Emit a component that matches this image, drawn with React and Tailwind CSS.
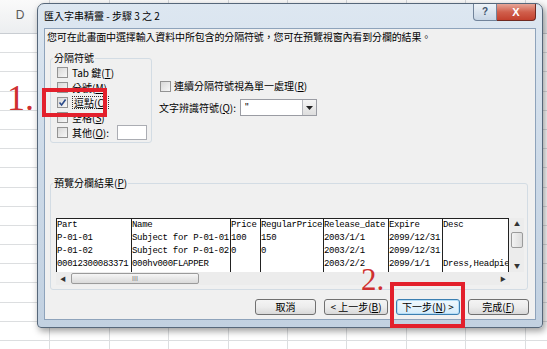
const cols = ['D', '', '', '', '', '', '', '', '', '']
const rows = Array.from({ length: 17 }, (_, i) => i)

const table = [
  { w: 75, cells: ['Part', 'P-01-01', 'P-01-02', '00012300083371'] },
  { w: 99, cells: ['Name', 'Subject for P-01-01', 'Subject for P-01-02', '000hv000FLAPPER'] },
  { w: 30, cells: ['Price', '100', '0', ''] },
  { w: 63, cells: ['RegularPrice', '150', '0', ''] },
  { w: 65, cells: ['Release_date', '2003/1/1', '2003/2/1', '2003/2/2'] },
  { w: 54, cells: ['Expire', '2099/12/31', '2099/12/31', '2099/1/1'] },
  { w: 66, cells: ['Desc', '', '', 'Dress,Headpiece'] },
]

function Sheet() {
  return (
    <div className="flex flex-col">
      <div className="flex h-[34px] ml-[-9px] border-b border-[#c9cdd2] bg-gradient-to-b from-[#fafafa] to-[#eceef0]">
        {cols.map((c, i) => (
          <div key={i} className="w-[59.4px] shrink-0 border-r border-[#d3d6da] flex items-center justify-center pb-[4px] text-[12px] text-[#5a5a5a] font-['Liberation_Sans',sans-serif]">
            {c}
          </div>
        ))}
      </div>
      {rows.map((r) => (
        <div key={r} className="flex h-[19.2px] ml-[-9px] border-b border-[#dcdee0]">
          {cols.map((c, i) => (
            <div key={i} className="w-[59.4px] shrink-0 border-r border-[#dcdee0]" />
          ))}
        </div>
      ))}
    </div>
  )
}

function Check({ checked }) {
  return (
    <span className="w-[11px] h-[11px] shrink-0 border border-[#939393] bg-gradient-to-br from-[#d8d8d8] to-[#f7f7f7] flex items-center justify-center">
      {checked && (
        <svg width="9" height="9" viewBox="0 0 9 9">
          <path d="M1.5 4.5 L3.6 7 L7.6 1.5" fill="none" stroke="#2a4a8a" strokeWidth="1.6" />
        </svg>
      )}
    </span>
  )
}

function Btn({ children, focus }) {
  return (
    <div
      className={`h-[16px] rounded-[3px] border flex items-center justify-center whitespace-nowrap ${
        focus
          ? 'border-[#3c7fb1] bg-gradient-to-b from-[#f2f9fd] to-[#d5ecfa] shadow-[inset_0_0_0_1px_#b6def7]'
          : 'border-[#707070] bg-gradient-to-b from-[#f4f4f4] via-[#ececec] to-[#d9d9d9]'
      }`}
    >
      {children}
    </div>
  )
}

function U({ children }) {
  return <span className="underline underline-offset-1">{children}</span>
}

function Preview() {
  return (
    <div className="flex flex-col w-[469px]">
      <div className="flex h-[54px]">
        <div className="flex w-[453px] bg-white border-t border-l border-[#222] font-['Liberation_Mono',monospace] text-[9px] tracking-[-0.3px] leading-[13px] text-black overflow-hidden">
          {table.map((col, i) => (
            <div key={i} className="shrink-0 border-r border-[#222] flex flex-col overflow-hidden" style={{ width: col.w }}>
              {col.cells.map((t, j) => (
                <div key={j} className="h-[13px] whitespace-nowrap">{t}</div>
              ))}
            </div>
          ))}
        </div>
        <div className="ml-[1px] w-[14px] bg-[#ececec] flex flex-col items-center">
          <span className="mt-[3px] text-[6px] leading-[6px] text-[#333]">▲</span>
          <div className="mt-[5px] w-[12px] h-[16px] rounded-[2px] border border-[#9b9b9b] bg-gradient-to-r from-[#f3f3f3] to-[#dcdcdc]" />
          <span className="mt-auto mb-[3px] text-[6px] leading-[6px] text-[#333]">▼</span>
        </div>
      </div>
      <div className="h-[13px] flex items-center bg-[#ececec] w-[454px]">
        <span className="ml-[4px] text-[6px] leading-[6px] text-[#333]">◀</span>
        <div className="ml-[5px] w-[128px] h-[11px] rounded-[2px] border border-[#9b9b9b] bg-gradient-to-b from-[#f6f6f6] to-[#dadada] flex items-center justify-center text-[7px] leading-[7px] text-[#777] font-['Liberation_Sans',sans-serif]">
          III
        </div>
        <span className="ml-auto mr-[4px] text-[6px] leading-[6px] text-[#333]">▶</span>
      </div>
    </div>
  )
}

function Dialog() {
  return (
    <div className="absolute left-[37px] top-[3px] w-[506px] h-[325px] rounded-t-[7px] rounded-b-[4px] border border-[#56677a] bg-gradient-to-b from-[#dde7f1] via-[#cddae8] to-[#c2d1e1] px-[6px] pb-[7px] flex flex-col shadow-[2px_3px_7px_rgba(0,0,0,0.4)] font-['Noto_Sans_CJK_TC',sans-serif]">
      <div className="h-[24px] flex items-start">
        <div className="pt-[6px] text-[10px] leading-[12px] text-black">匯入字串精靈 - 步驟 3 之 2</div>
        <div className="ml-auto flex">
          <div className="w-[24px] h-[17px] rounded-bl-[4px] border border-t-0 border-[#71839a] bg-gradient-to-b from-[#eef3f8] to-[#c8d6e5] flex items-center justify-center text-[10px] leading-[10px] font-bold text-[#42546c] font-['Liberation_Sans',sans-serif]">
            ?
          </div>
          <div className="w-[39px] h-[17px] rounded-br-[4px] border border-t-0 border-l-0 border-[#6e2a22] bg-gradient-to-b from-[#e6a597] via-[#d05f4c] to-[#c3402d] flex items-center justify-center text-[11px] leading-[11px] font-bold text-white font-['Liberation_Sans',sans-serif]">
            X
          </div>
        </div>
      </div>
      <div className="flex-1 border border-[#8ea3bb] bg-[#f0f0f0] flex flex-col text-[10px] leading-[12px] text-black">
        <div className="mt-[2px] pl-[2px] h-[12px] whitespace-nowrap tracking-[-0.15px]">
          您可在此畫面中選擇輸入資料中所包含的分隔符號，您可在預覽視窗內看到分欄的結果。
        </div>

        <div className="flex mt-[9px] ml-[5px]">
          <fieldset className="w-[102px] shrink-0 border border-[#d3dce4] rounded-[3px]">
            <legend className="ml-[2px] px-[1px] leading-[12px]">分隔符號</legend>
            <div className="pl-[6px] pt-[1px] pb-[2px] flex flex-col whitespace-nowrap">
              <div className="h-[15px] flex items-center gap-[4px]">
                <Check />
                <span>Tab 鍵(<U>T</U>)</span>
              </div>
              <div className="h-[15px] flex items-center gap-[4px]">
                <Check />
                <span>分號(<U>M</U>)</span>
              </div>
              <div className="h-[15px] flex items-center gap-[4px]">
                <Check checked />
                <span className="border border-dotted border-[#333] px-[1px] leading-[11px]">逗點(<U>C</U>)</span>
              </div>
              <div className="h-[15px] flex items-center gap-[4px]">
                <Check />
                <span>空格(<U>S</U>)</span>
              </div>
              <div className="h-[15px] flex items-center gap-[4px]">
                <Check />
                <span className="shrink-0">其他(<U>O</U>):</span>
                <div className="ml-auto mr-[4px] w-[30px] h-[15px] shrink-0 bg-white border border-[#abadb3]" />
              </div>
            </div>
          </fieldset>

          <div className="ml-[8px] mt-[27px] flex flex-col whitespace-nowrap">
            <div className="h-[14px] flex items-center gap-[3px]">
              <Check />
              <span>連續分隔符號視為單一處理(<U>R</U>)</span>
            </div>
            <div className="mt-[6px] ml-[-1px] h-[17px] flex items-center">
              <span>文字辨識符號(<U>Q</U>):</span>
              <div className="ml-[4px] w-[77px] h-[17px] bg-white border border-[#9a9ca3] flex items-center">
                <span className="pl-[4px] flex-1 font-['Liberation_Sans',sans-serif] text-[10px]">"</span>
                <div className="w-[14px] h-[15px] border-l border-[#b5b7bd] bg-gradient-to-b from-[#f5f5f5] to-[#dedede] flex items-center justify-center">
                  <svg width="7" height="4" viewBox="0 0 7 4">
                    <path d="M0 0 H7 L3.5 4 Z" fill="#222" />
                  </svg>
                </div>
              </div>
            </div>
          </div>
        </div>

        <fieldset className="mt-[34px] ml-[5px] w-[478px] border border-[#d3dce4] rounded-[3px]">
          <legend className="ml-[2px] px-[1px] leading-[12px]">預覽分欄結果(<U>P</U>)</legend>
          <div className="pt-[29px] pl-[5px] pb-[4px]">
            <Preview />
          </div>
        </fieldset>

        <div className="mt-[9px] pr-[6px] flex justify-end gap-[8px]">
          <div className="w-[61px]"><Btn>取消</Btn></div>
          <div className="w-[64px]"><Btn>&lt; 上一步(<U>B</U>)</Btn></div>
          <div className="w-[64px]"><Btn focus>下一步(<U>N</U>) &gt;</Btn></div>
          <div className="w-[61px]"><Btn>完成(<U>F</U>)</Btn></div>
        </div>
      </div>
    </div>
  )
}

export default function App() {
  return (
    <div className="relative w-[547px] h-[349px] overflow-hidden bg-white">
      <Sheet />
      <Dialog />

      {/* annotations */}
      <div className="absolute left-[7px] top-[80px] text-[36px] leading-none text-[#cf3030] font-['Liberation_Serif',serif]">1.</div>
      <div className="absolute left-[42px] top-[88px] w-[65px] h-[29px] border-[4px] border-[#e3202c]" />
      <div className="absolute left-[361px] top-[264px] text-[31px] leading-none text-[#cf3030] font-['Liberation_Serif',serif]">2.</div>
      <div className="absolute left-[390px] top-[282px] w-[75px] h-[46px] border-[4px] border-[#e3202c]" />
    </div>
  )
}
